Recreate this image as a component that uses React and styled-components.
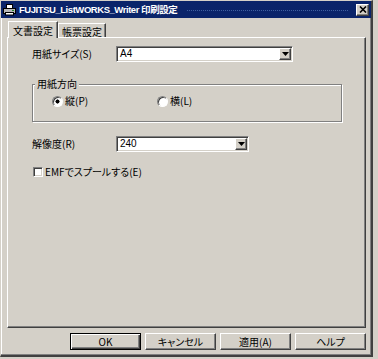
import React from "react";
import styled, { createGlobalStyle, css } from "styled-components";

const FACE = "#d4d0c8";
const SHADOW = "#808080";
const DARK = "#404040";

const GlobalStyle = createGlobalStyle`
  html, body {
    margin: 0;
    padding: 0;
    background: ${FACE};
  }
  body {
    font-family: "Noto Sans CJK JP", "Liberation Sans", sans-serif;
    font-size: 10px;
    line-height: 12px;
    color: #000;
    font-feature-settings: "palt";
  }
`;

const raised = css`
  background: ${FACE};
  border: 1px solid;
  border-color: #fff ${DARK} ${DARK} #fff;
  box-shadow: inset -1px -1px 0 ${SHADOW};
`;

const sunken = css`
  background: #fff;
  border: 1px solid;
  border-color: ${SHADOW} #fff #fff ${SHADOW};
  box-shadow: inset 1px 1px 0 ${DARK}, inset -1px -1px 0 ${FACE};
`;

const Window = styled.div`
  box-sizing: border-box;
  width: 373px;
  height: 357px;
  display: flex;
  flex-direction: column;
  background: ${FACE};
  border-top: 1px solid ${FACE};
  border-left: 1px solid ${FACE};
  border-right: 2px solid ${DARK};
  border-bottom: 2px solid ${DARK};
  box-shadow: inset -1px -1px 0 ${SHADOW}, inset 1px 1px 0 #fff;
`;

const TitleBar = styled.div`
  flex: none;
  height: 17px;
  display: flex;
  align-items: center;
  padding: 0 2px 0 2px;
  background: #0a246a;
`;

const TitleText = styled.span`
  margin-left: 3px;
  font-family: "Liberation Sans", "Noto Sans CJK JP", sans-serif;
  font-weight: bold;
  font-size: 9.5px;
  letter-spacing: -0.45px;
  color: #fff;
  white-space: nowrap;
`;

const TitleFill = styled.div`
  flex: 1;
  margin: 1px 8px 0 10px;
  border-top: 1px dotted #3f5f9f;
`;

const CloseButton = styled.div`
  ${raised};
  box-sizing: border-box;
  width: 13px;
  height: 12px;
  display: flex;
  align-items: center;
  justify-content: center;
`;

const Body = styled.div`
  flex: 1;
  display: flex;
  flex-direction: column;
  padding: 3px 5px 0 6px;
`;

const TabRow = styled.div`
  display: flex;
  align-items: flex-end;
  height: 16px;
  padding-left: 1px;
  position: relative;
  z-index: 1;
`;

const Tab = styled.div`
  box-sizing: border-box;
  width: ${(p) => p.$width}px;
  height: ${(p) => (p.$active ? 17 : 14)}px;
  margin-bottom: ${(p) => (p.$active ? -1 : 0)}px;
  padding-top: ${(p) => (p.$active ? 3 : 2)}px;
  display: flex;
  justify-content: center;
  background: ${FACE};
  border-top: 1px solid #fff;
  border-left: 1px solid #fff;
  border-right: 1px solid ${DARK};
  box-shadow: inset -1px 0 0 ${SHADOW};
`;

const Panel = styled.div`
  ${raised};
  box-sizing: border-box;
  height: 291px;
  display: flex;
  flex-direction: column;
  padding: 8px 0 0 24px;
`;

const FieldRow = styled.div`
  display: flex;
  align-items: center;
  height: 16px;
  margin-top: ${(p) => p.$gap || 0}px;
`;

const Label = styled.span`
  width: 84px;
  white-space: nowrap;
`;

const Select = styled.div`
  ${sunken};
  box-sizing: border-box;
  width: ${(p) => p.$width}px;
  height: 16px;
  padding: 1px;
  display: flex;
`;

const SelectValue = styled.span`
  flex: 1;
  padding-left: 2px;
  font-family: "Liberation Sans", "Noto Sans CJK JP", sans-serif;
  font-size: 10px;
  line-height: 12px;
`;

const ArrowButton = styled.div`
  ${raised};
  box-sizing: border-box;
  width: 12px;
  display: flex;
  align-items: center;
  justify-content: center;
`;

const GroupBox = styled.div`
  box-sizing: border-box;
  width: 310px;
  height: 38px;
  margin-top: 22px;
  padding-left: 19px;
  border: 1px solid ${SHADOW};
  box-shadow: inset 1px 1px 0 #fff, 1px 1px 0 #fff;
`;

const GroupTitle = styled.div`
  width: fit-content;
  height: 12px;
  margin: -7px 0 0 -17px;
  padding: 0 2px;
  background: ${FACE};
`;

const RadioRow = styled.div`
  display: grid;
  grid-template-columns: 105px 105px;
  margin-top: 5px;
  height: 12px;
`;

const Choice = styled.label`
  display: flex;
  align-items: center;
  gap: 2px;
`;

const RadioDot = styled.span`
  box-sizing: border-box;
  width: 11px;
  height: 11px;
  border-radius: 50%;
  border: 1px solid;
  border-color: ${SHADOW} #fff #fff ${SHADOW};
  box-shadow: inset 1px 1px 0 ${DARK};
  background: ${(p) =>
    p.$checked
      ? "radial-gradient(circle at 50% 50%, #000 0 1.8px, #fff 2.3px)"
      : "#fff"};
`;

const CheckRow = styled.label`
  display: flex;
  align-items: center;
  gap: 2px;
  height: 12px;
  margin-top: 14px;
  padding-left: 1px;
`;

const CheckBox = styled.span`
  ${sunken};
  box-sizing: border-box;
  width: 10px;
  height: 10px;
`;

const ButtonRow = styled.div`
  display: flex;
  justify-content: flex-end;
  gap: 4px;
  margin-top: 5px;
`;

const Button = styled.div`
  ${raised};
  box-sizing: border-box;
  width: 71px;
  height: 17px;
  display: flex;
  align-items: center;
  justify-content: center;
  ${(p) =>
    p.$default &&
    css`
      border: 1px solid #000;
      box-shadow: inset 1px 1px 0 #fff, inset -1px -1px 0 ${DARK},
        inset -2px -2px 0 ${SHADOW};
    `}
`;

const PrinterIcon = () => (
  <svg width="13" height="13" viewBox="0 0 13 13">
    <rect x="3.5" y="1.5" width="6" height="4" fill="#fff" stroke="#000" />
    <rect x="0.5" y="5.5" width="12" height="5" fill="#b8b8b8" stroke="#000" />
    <rect x="2.5" y="9.5" width="8" height="2.5" fill="#fff" stroke="#000" />
    <rect x="9" y="7" width="2" height="1" fill="#2a8a2a" />
  </svg>
);

const CloseIcon = () => (
  <svg width="8" height="7" viewBox="0 0 8 7">
    <path d="M1 0.5 L7 6.5 M7 0.5 L1 6.5" stroke="#000" strokeWidth="1.6" />
  </svg>
);

const ArrowIcon = () => (
  <svg width="7" height="4" viewBox="0 0 7 4">
    <polygon points="0,0 7,0 3.5,4" fill="#000" />
  </svg>
);

export default function App() {
  return (
    <>
      <GlobalStyle />
      <Window>
        <TitleBar>
          <PrinterIcon />
          <TitleText>FUJITSU_ListWORKS_Writer 印刷設定</TitleText>
          <TitleFill />
          <CloseButton>
            <CloseIcon />
          </CloseButton>
        </TitleBar>
        <Body>
          <TabRow>
            <Tab $active $width={50}>文書設定</Tab>
            <Tab $width={48}>帳票設定</Tab>
          </TabRow>
          <Panel>
            <FieldRow>
              <Label>用紙サイズ(S)</Label>
              <Select $width={177}>
                <SelectValue>A4</SelectValue>
                <ArrowButton>
                  <ArrowIcon />
                </ArrowButton>
              </Select>
            </FieldRow>
            <GroupBox>
              <GroupTitle>用紙方向</GroupTitle>
              <RadioRow>
                <Choice>
                  <RadioDot $checked />
                  縦(P)
                </Choice>
                <Choice>
                  <RadioDot />
                  横(L)
                </Choice>
              </RadioRow>
            </GroupBox>
            <FieldRow $gap={14}>
              <Label>解像度(R)</Label>
              <Select $width={133}>
                <SelectValue>240</SelectValue>
                <ArrowButton>
                  <ArrowIcon />
                </ArrowButton>
              </Select>
            </FieldRow>
            <CheckRow>
              <CheckBox />
              EMFでスプールする(E)
            </CheckRow>
          </Panel>
          <ButtonRow>
            <Button $default>OK</Button>
            <Button>キャンセル</Button>
            <Button>適用(A)</Button>
            <Button>ヘルプ</Button>
          </ButtonRow>
        </Body>
      </Window>
    </>
  );
}
